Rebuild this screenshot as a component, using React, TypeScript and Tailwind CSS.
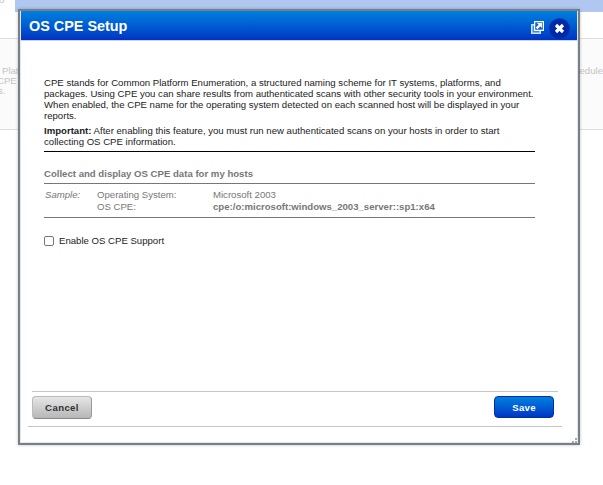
import React from "react";

function PopOutIcon() {
  return (
    <svg className="mt-[3px]" width="13" height="13" viewBox="0 0 13 13" aria-hidden="true">
      <path d="M0 3h3v7h7v3H0z" fill="#cfe2fa" />
      <path d="M1.5 4.5H3V10h5.5v1.5h-7z" fill="#3c8be6" />
      <path d="M3.6.6h8.8v8.8H3.6z" fill="#1267d8" stroke="#fff" strokeWidth="1.2" />
      <path d="M6 2h5v5L9.3 5.3 6.4 8.2 4.8 6.6l2.9-2.9z" fill="#fff" />
    </svg>
  );
}

function CloseIcon() {
  return (
    <svg width="21" height="21" viewBox="0 0 21 21" aria-hidden="true">
      <circle cx="10.5" cy="10.5" r="10.3" fill="#0029a8" />
      <path d="m7 7 7 7m0-7-7 7" stroke="#fff" strokeWidth="3.2" />
    </svg>
  );
}

function Backdrop() {
  return (
    <div className="h-full text-[9.6px] leading-[10px] text-[#c3c3c3]">
      <div className="flex h-3">
        <div className="w-[15px] overflow-hidden">
          <div className="-mt-[5px] -ml-[1px]">o</div>
        </div>
        <div className="flex-1 bg-[#b0c8f0]" />
      </div>
      <div className="h-[26px]" />
      <div className="flex h-[92px] justify-between border-y border-[#dedede] bg-[#fbfbfb] pt-[27px]">
        <div className="w-[18px] whitespace-nowrap">
          <div className="ml-[2px]">Plat</div>
          <div className="-ml-[3px]">CPE</div>
          <div className="-ml-[2px]">s.</div>
        </div>
        <div className="flex w-[30px] justify-end whitespace-nowrap">hedule</div>
      </div>
    </div>
  );
}

function Intro() {
  return (
    <div className="border-b border-black pb-1 whitespace-nowrap text-[#222]">
      <p>
        CPE stands for Common Platform Enumeration, a structured naming scheme for IT systems, platforms, and<br />
        packages. Using CPE you can share results from authenticated scans with other security tools in your environment.<br />
        When enabled, the CPE name for the operating system detected on each scanned host will be displayed in your<br />
        reports.
      </p>
      <p className="mt-1">
        <b>Important:</b> After enabling this feature, you must run new authenticated scans on your hosts in order to start<br />
        collecting OS CPE information.
      </p>
    </div>
  );
}

function Sample() {
  return (
    <section className="text-[#777]">
      <h2 className="border-b border-[#777] pt-4 pb-1 font-bold">Collect and display OS CPE data for my hosts</h2>
      <div className="grid h-[34px] grid-cols-[52px_116px_1fr] grid-rows-[12px_12px] border-b border-[#777] pt-[5px] pl-px leading-[12px]">
        <i>Sample:</i>
        <span>Operating System:</span>
        <span>Microsoft 2003</span>
        <span />
        <span>OS CPE:</span>
        <b>cpe:/o:microsoft:windows_2003_server::sp1:x64</b>
      </div>
    </section>
  );
}

export default function App() {
  return (
    <div className="relative h-[485px] w-[603px] overflow-hidden bg-white font-['Liberation_Sans',Arial,sans-serif]">
      <Backdrop />
      <div
        role="dialog"
        className="absolute top-[9px] left-[18px] flex h-[436px] w-[562px] flex-col border-2 border-[#7b7f85] bg-white text-[9.6px] leading-[11px] shadow-[0_0_3px_rgba(0,0,0,0.25)]"
      >
        <div className="flex flex-1 flex-col border border-t-0 border-[#dce8f6]">
          <header className="flex h-[30px] items-center border-b border-[#cbd3e0] bg-linear-to-b from-[#0080df] to-[#0033c4] pr-[7px] pl-[8px]">
            <h1 className="flex-1 pt-px text-[14.4px] leading-4 font-bold text-white">OS CPE Setup</h1>
            <PopOutIcon />
            <button className="mt-[5px] ml-[5px]" aria-label="Close">
              <CloseIcon />
            </button>
          </header>
          <main className="flex-1 pt-9 pr-[42px] pl-[23px]">
            <Intro />
            <Sample />
            <label className="mt-[17px] flex items-center gap-[5px] text-[#222]">
              <input type="checkbox" className="size-[10px] appearance-none rounded-[2px] border border-[#767676] bg-white" />
              Enable OS CPE Support
            </label>
          </main>
          <footer className="pr-[15px] pb-[15px] pl-[7px]">
            <div className="mx-[4px] flex h-[35px] items-start justify-between border-t border-[#c5c5c5] pt-1 pr-[4px]">
              <button className="h-[23px] w-[60px] rounded-[4px] border border-[#bbb] border-r-[#999] border-b-[#888] bg-linear-to-b from-[#e6e6e6] to-[#b7b7b7] font-bold tracking-[0.4px] text-[#333]">
                Cancel
              </button>
              <button className="h-[22px] w-[60px] rounded-[4px] border border-[#002fa0] bg-linear-to-b from-[#0080df] to-[#0033c4] font-bold tracking-[0.3px] text-white">
                Save
              </button>
            </div>
            <div className="border-t border-[#c5c5c5]" />
          </footer>
        </div>
        <svg className="absolute right-[1px] bottom-0" width="5" height="5" aria-hidden="true">
          <path d="M3 0h2v2H3zM0 3h2v2H0zM3 3h2v2H3z" fill="#aaa" />
        </svg>
      </div>
    </div>
  );
}
